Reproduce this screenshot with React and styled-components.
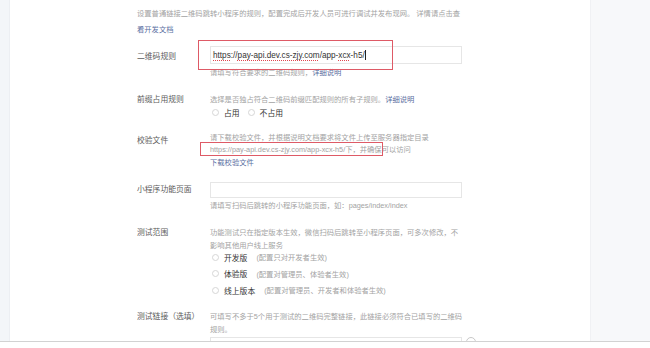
import styled, { createGlobalStyle } from "styled-components"

const GlobalStyle = createGlobalStyle`
  html, body {
    margin: 0;
    padding: 0;
    background: #fff;
  }
  body {
    font-family: "Liberation Sans", "Noto Sans CJK SC", sans-serif;
    -webkit-font-smoothing: antialiased;
  }
`

const Page = styled.div`
  width: 650px;
  height: 348px;
  display: flex;
  flex-direction: column;
  overflow: hidden;
`

const Body = styled.div`
  display: flex;
  height: 341px;
  overflow: hidden;
`

const SideStrip = styled.div`
  width: 10px;
  flex: none;
  background: #f3f6f9;
  border-right: 1px solid #eceff3;
  box-sizing: border-box;
`

const Main = styled.div`
  width: 580px;
  flex: none;
  background: #fff;
  padding: 6px 0 0 127px;
  box-sizing: border-box;
`

const Aside = styled.div`
  flex: 1;
  background: #f7f8fa;
  border-left: 1px solid #f0f1f4;
`

const Footer = styled.div`
  height: 7px;
  border-top: 1px solid #d2d2d2;
  background: #fff;
  box-sizing: border-box;
`

const Intro = styled.p`
  margin: 0;
  font-size: 7.3px;
  line-height: 16px;
  color: #a3a3a3;
  white-space: nowrap;
`

const Row = styled.div`
  display: grid;
  grid-template-columns: 73px 252px;
  margin-top: ${(p) => p.$mt}px;
`

const Label = styled.div`
  font-size: 7.8px;
  line-height: ${(p) => p.$lh || 12}px;
  padding-top: ${(p) => p.$pt || 0}px;
  color: #5c5c5c;
  white-space: nowrap;
`

const Field = styled.div`
  position: relative;
  display: flex;
  flex-direction: column;
`

const Text = styled.div`
  font-size: 7.3px;
  line-height: ${(p) => p.$lh || 12}px;
  color: #a3a3a3;
  white-space: nowrap;
`

const Link = styled.a`
  color: #5a6e9f;
  text-decoration: none;
`

const Input = styled.div`
  height: ${(p) => p.$h}px;
  margin-top: ${(p) => p.$mt || 0}px;
  border: 1px solid #e6e6e6;
  box-sizing: border-box;
  display: flex;
  align-items: center;
  padding-left: 2px;
  font-size: 8.2px;
  color: #333;
  white-space: nowrap;
`

const Spell = styled.span`
  text-decoration: underline dotted #e0454f;
  text-underline-offset: 1.5px;
`

const Caret = styled.span`
  display: inline-block;
  width: 1px;
  height: 10px;
  background: #222;
  margin-left: 0.5px;
`

const Hint = styled.div`
  font-size: 7.3px;
  line-height: 12px;
  margin-top: ${(p) => p.$mt || 0}px;
  color: #a3a3a3;
  white-space: nowrap;
`

const RadioLine = styled.div`
  display: flex;
  align-items: center;
  height: ${(p) => p.$h}px;
  gap: ${(p) => p.$gap || 0}px;
`

const RadioList = styled.div`
  display: flex;
  flex-direction: column;
  margin-top: -3px;
`

const RadioItem = styled.label`
  display: flex;
  align-items: center;
  font-size: 7.8px;
  color: #333;
  white-space: nowrap;
`

const Circle = styled.span`
  width: 7px;
  height: 7px;
  border-radius: 50%;
  border: 1px solid #d6d6d6;
  box-sizing: border-box;
  margin: 0 5px 0 2px;
  flex: none;
`

const Note = styled.span`
  color: #a3a3a3;
  font-size: 7.3px;
  margin-left: 9px;
`

const Mark = styled.div`
  position: absolute;
  left: ${(p) => p.$x}px;
  top: ${(p) => p.$y}px;
  width: ${(p) => p.$w}px;
  height: ${(p) => p.$h}px;
  border: 1.5px solid #de5a66;
  box-sizing: border-box;
  pointer-events: none;
`

const RemoveBtn = styled.span`
  position: absolute;
  left: 256px;
  top: 27px;
  width: 10px;
  height: 10px;
  border-radius: 50%;
  border: 1px solid #c8c8c8;
  box-sizing: border-box;
`

export default function App() {
  return (
    <Page>
      <GlobalStyle />
      <Body>
        <SideStrip />
        <Main>
          <Intro>
            设置普通链接二维码跳转小程序的规则，配置完成后开发人员可进行调试并发布现网。 详情请点击查
            <br />
            <Link>看开发文档</Link>
          </Intro>

          <Row $mt={8}>
            <Label $lh={18} $pt={2}>二维码规则</Label>
            <Field>
              <Input $h={18}>
                <Spell>https</Spell>://<Spell>pay-api.dev.cs-zjy.com</Spell>/app-<Spell>xcx</Spell>-h5/
                <Caret />
              </Input>
              <Hint $mt={3}>
                请填写符合要求的二维码规则，<Link>详细说明</Link>
              </Hint>
              <Mark $x={-12} $y={-6} $w={195} $h={30} />
            </Field>
          </Row>

          <Row $mt={15}>
            <Label>前缀占用规则</Label>
            <Field>
              <Text>
                选择是否独占符合二维码前缀匹配规则的所有子规则。<Link>详细说明</Link>
              </Text>
              <RadioLine $h={12} $gap={6}>
                <RadioItem>
                  <Circle />
                  占用
                </RadioItem>
                <RadioItem>
                  <Circle />
                  不占用
                </RadioItem>
              </RadioLine>
            </Field>
          </Row>

          <Row $mt={14}>
            <Label $pt={3}>校验文件</Label>
            <Field>
              <Text $lh={12.4}>
                请下载校验文件，并根据说明文档要求将文件上传至服务器指定目录
                <br />
                https://pay-api.dev.cs-zjy.com/app-xcx-h5/下，并确保可以访问
                <br />
                <Link>下载校验文件</Link>
              </Text>
              <Mark $x={-10} $y={10} $w={183} $h={14} />
            </Field>
          </Row>

          <Row $mt={13}>
            <Label $lh={16}>小程序功能页面</Label>
            <Field>
              <Input $h={16} />
              <Hint $mt={2}>请填写扫码后跳转的小程序功能页面，如：pages/index/index</Hint>
            </Field>
          </Row>

          <Row $mt={14}>
            <Label $lh={13}>测试范围</Label>
            <Field>
              <Text $lh={13}>
                功能测试只在指定版本生效，微信扫码后跳转至小程序页面，可多次修改，不
                <br />
                影响其他用户线上服务
              </Text>
              <RadioList>
                {[
                  ["开发版", "(配置只对开发者生效)"],
                  ["体验版", "(配置对管理员、体验者生效)"],
                  ["线上版本", "(配置对管理员、开发者和体验者生效)"],
                ].map(([name, note]) => (
                  <RadioLine key={name} $h={16.5}>
                    <RadioItem>
                      <Circle />
                      {name}
                      <Note>{note}</Note>
                    </RadioItem>
                  </RadioLine>
                ))}
              </RadioList>
            </Field>
          </Row>

          <Row $mt={11.5}>
            <Label $lh={13}>测试链接（选填）</Label>
            <Field>
              <Text $lh={13}>
                可填写不多于5个用于测试的二维码完整链接，此链接必须符合已填写的二维码
                <br />
                规则。
              </Text>
              <Input $h={18} $mt={1} />
              <RemoveBtn />
            </Field>
          </Row>
        </Main>
        <Aside />
      </Body>
      <Footer />
    </Page>
  )
}
